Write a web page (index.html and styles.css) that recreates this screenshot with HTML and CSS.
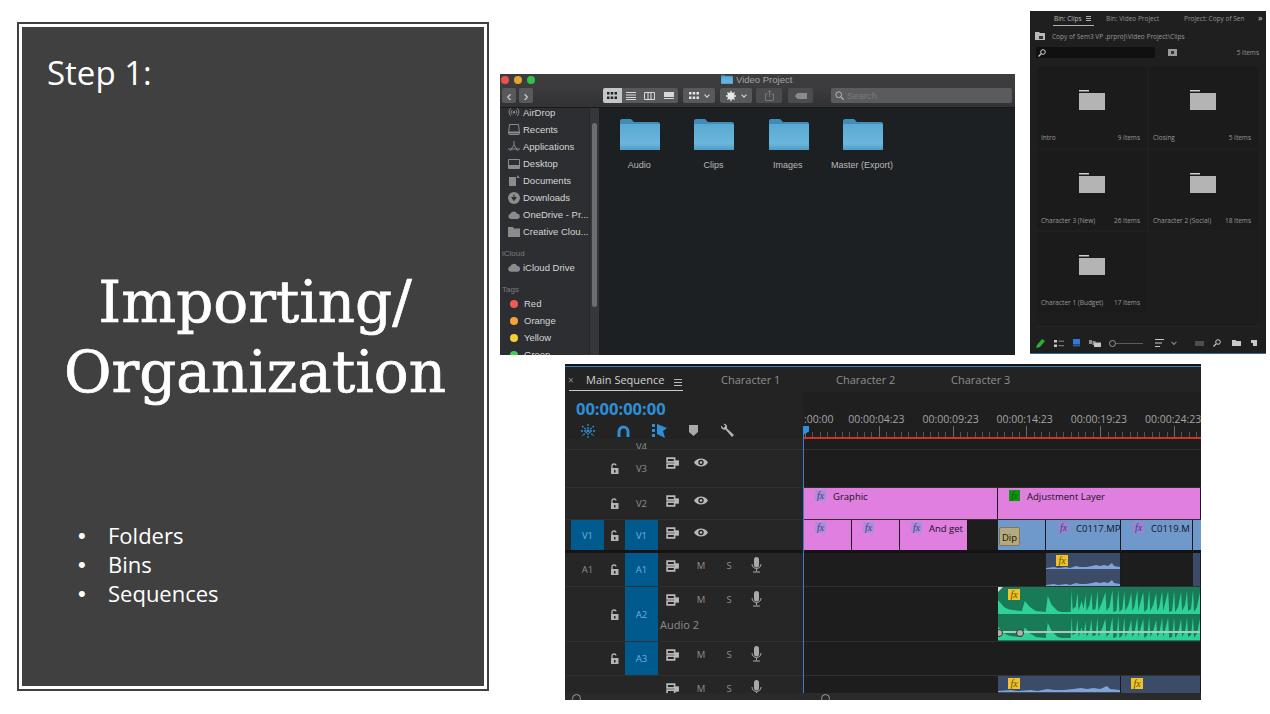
FILE: index.html
```html
<!DOCTYPE html>
<html lang="en">
<head>
    <meta charset="UTF-8">
    <meta name="viewport" content="width=device-width, initial-scale=1.0">
    <title>Step 1: Importing / Organization</title>
    <link rel="stylesheet" href="styles.css">
</head>
<body>
<svg class="defs" width="0" height="0">
    <symbol id="i-toggle" viewBox="0 0 13 11"><path d="M1 1h7v3.500H1zM1 6.500h7V10H1z" fill="none" stroke="currentColor" stroke-width="1.500"/><path d="M8 3h4v5H8z" fill="currentColor"/></symbol>
    <symbol id="i-eye" viewBox="0 0 14 9"><path d="M0 4.500C3 -0.800 11 -0.800 14 4.500C11 9.800 3 9.800 0 4.500Z" fill="currentColor"/><circle cx="7" cy="4.500" r="2.700" fill="#232323"/><circle cx="7" cy="4.500" r="1.300" fill="currentColor"/></symbol>
    <symbol id="i-lock" viewBox="0 0 9 11"><path d="M1 5h7.500v6H1z" fill="currentColor"/><path d="M2 5V2.500C2 .5 6 .5 6 2.500" fill="none" stroke="currentColor" stroke-width="1.300"/><rect x="4" y="7" width="1.500" height="2.500" fill="#232323"/></symbol>
    <symbol id="i-mic" viewBox="0 0 11 16"><rect x="3" y="0" width="5" height="10.500" rx="2.500" fill="currentColor"/><path d="M1 7c0 6 9 6 9 0M5.500 12v2.500M2 15h7" fill="none" stroke="currentColor" stroke-width="1"/></symbol>
    <symbol id="i-mac-folder" viewBox="0 0 40 31"><path d="M0 31V2q0-2 2-2h9l3 3h24q2 0 2 2v26z" fill="#3f8db5"/><path d="M0 30V6q0-1 1-1h38q1 0 1 1v24q0 1-1 1H1q-1 0-1-1z" fill="url(#macBlue)"/></symbol>
    <linearGradient id="macBlue" x1="0" y1="0" x2="0" y2="1"><stop offset="0" stop-color="#59a9d2"/><stop offset=".75" stop-color="#6bb6dc"/><stop offset="1" stop-color="#4f9cc4"/></linearGradient>
    <symbol id="i-bin-folder" viewBox="0 0 26 20"><path d="M0 0h10v1.500H0z" fill="#cfcfcf"/><path d="M0 3h26v17H0z" fill="#b4b4b4"/></symbol>
    <symbol id="i-cloud" viewBox="0 0 13 9"><path d="M3 9a3 3 0 0 1-.5-5.900A4 4 0 0 1 10 3a3 3 0 0 1 0 6z" fill="currentColor"/></symbol>
    <symbol id="i-wave" viewBox="0 0 203 27" preserveAspectRatio="none"><path d="M0 27V13L6 20 10 22 14 23 24 24 27 14 32 20 38 24 48 25 50 9 54 18 60 24 64 25 73 25 74 3 75 22 78 20 80 6 81 24 84 14 86 22 88 8 89 24 92 18 94 6 95 23 98 22 100 4 101 24 105 14 108 5 109 24 112 20 115 3 116 25 119 24 121 2 122 25 125 22 127 4 128 24 131 18 134 6 135 24 137 20 140 3 141 24 143 16 146 5 147 25 150 22 152 3 153 24 156 18 159 6 160 24 162 20 165 4 166 24 168 16 171 4 172 25 175 24 177 3 178 25 181 20 184 5 185 24 188 18 190 4 191 24 194 22 196 3 197 25 200 20 203 5V27Z" fill="#2fd296"/></symbol>
    <symbol id="i-low" viewBox="0 0 74 16" preserveAspectRatio="none"><path d="M0 16V15L8 14 12 15 20 14 24 15 30 13 34 14 40 14 46 13 50 12 54 13 58 12 62 13 66 10 68 13 74 14V16Z" fill="#7fa5d8"/></symbol>
</svg>

<main class="slide">
    <section class="title-card">
        <p class="step">Step 1:</p>
        <h1 class="headline">Importing/<br>Organization</h1>
        <ul class="points">
            <li>Folders</li>
            <li>Bins</li>
            <li>Sequences</li>
        </ul>
    </section>

    <section class="finder">
        <div class="finder-title">
            <span class="light red"></span><span class="light yellow"></span><span class="light green"></span>
            <span class="finder-name"><svg width="12" height="9"><use href="#i-mac-folder"/></svg>Video Project</span>
        </div>
        <div class="finder-tools">
            <div class="btn nav">&#8249;</div>
            <div class="btn nav">&#8250;</div>
            <div class="segs">
                <div class="seg on"><svg width="10" height="8" viewBox="0 0 10 8"><path d="M0 0h2.500v2.500H0zM3.700 0h2.500v2.500H3.700zM7.500 0H10v2.500H7.500zM0 4.500h2.500V7H0zM3.700 4.500h2.500V7H3.700zM7.500 4.500H10V7H7.500z" fill="#222"/></svg></div>
                <div class="seg"><svg width="10" height="8" viewBox="0 0 10 8"><path d="M0 .5h10M0 3h10M0 5.500h10M0 7.500h10" stroke="#d8d8d8"/></svg></div>
                <div class="seg"><svg width="11" height="8" viewBox="0 0 11 8"><path d="M.5.500h10v7H.5zM4 .5v7M7 .5v7" fill="none" stroke="#d8d8d8"/></svg></div>
                <div class="seg"><svg width="10" height="8" viewBox="0 0 10 8"><path d="M0 0h10v5H0z" fill="#d8d8d8"/><path d="M0 6.500h10" stroke="#d8d8d8"/></svg></div>
            </div>
            <div class="btn arrange"><svg width="10" height="8" viewBox="0 0 10 8"><path d="M0 0h2.500v2.500H0zM3.700 0h2.500v2.500H3.700zM7.500 0H10v2.500H7.500zM0 4.500h2.500V7H0zM3.700 4.500h2.500V7H3.700zM7.500 4.500H10V7H7.500z" fill="#e4e4e4"/></svg><i class="chev"></i></div>
            <div class="btn action"><svg width="10" height="10" viewBox="0 0 10 10"><circle cx="5" cy="5" r="2.500" fill="none" stroke="#e8e8e8" stroke-width="2"/><path d="M5 0v10M0 5h10M1.500 1.500l7 7M8.500 1.500l-7 7" stroke="#e8e8e8" stroke-width="1.300"/></svg><i class="chev"></i></div>
            <div class="btn share"><svg width="9" height="11" viewBox="0 0 9 11"><path d="M2.500 4H.5v6.500h8V4h-2M4.500 7V.8M2.800 2.300 4.500.6l1.700 1.700" fill="none" stroke="#777"/></svg></div>
            <div class="btn tag"><svg width="12" height="6" viewBox="0 0 12 6"><path d="M2.500 0H12v6H2.500L0 3z" fill="#8b8b8b"/></svg></div>
            <div class="search"><svg width="9" height="9" viewBox="0 0 9 9"><circle cx="3.700" cy="3.700" r="2.900" fill="none" stroke="#b5b5b5"/><path d="M6 6l2.700 2.700" stroke="#b5b5b5" stroke-width="1.200"/></svg>Search</div>
        </div>
        <div class="finder-body">
            <aside class="sidebar">
                <div class="side-list">
                    <div class="side-item"><svg width="12" height="11" viewBox="0 0 12 11"><path d="M3 9C.5 7 .5 3 3 1M9 9c2.500-2 2.500-6 0-8M4.300 7.500c-1.500-1-1.500-3.500 0-4.500M7.700 7.500c1.500-1 1.500-3.500 0-4.500" fill="none" stroke="#8c8c8c"/><circle cx="6" cy="5.200" r="1.200" fill="#8c8c8c"/></svg>AirDrop</div>
                    <div class="side-item"><svg width="12" height="11" viewBox="0 0 12 11"><path d="M1.500.500h9l1 8.500q0 1.500-1.500 1.500H2Q.5 10.500.5 9z" fill="none" stroke="#8c8c8c"/><path d="M1 7.500h10v2H1z" fill="#8c8c8c"/></svg>Recents</div>
                    <div class="side-item"><svg width="12" height="11" viewBox="0 0 12 11"><path d="M6 0v4M6 4 2 10M6 4l4 6M0 8h12" fill="none" stroke="#8c8c8c"/></svg>Applications</div>
                    <div class="side-item"><svg width="12" height="10" viewBox="0 0 12 10"><path d="M.5.500h11v9H.5z" fill="none" stroke="#8c8c8c"/><path d="M1 6h10v3H1z" fill="#8c8c8c"/></svg>Desktop</div>
                    <div class="side-item"><svg width="12" height="11" viewBox="0 0 12 11"><path d="M1 2h7v9H1z" fill="#8c8c8c"/><path d="M9 0l3 3H9z" fill="#8c8c8c"/></svg>Documents</div>
                    <div class="side-item"><svg width="12" height="12" viewBox="0 0 12 12"><circle cx="6" cy="6" r="6" fill="#8c8c8c"/><path d="M6 2.500v4M3.800 5.500 6 8.500l2.200-3z" stroke="#2c2e31" fill="#2c2e31"/></svg>Downloads</div>
                    <div class="side-item"><svg width="12" height="8"><use href="#i-cloud"/></svg>OneDrive - Pr...</div>
                    <div class="side-item"><svg width="12" height="10" viewBox="0 0 12 10"><path d="M0 0h5l1 1.500h6V10H0z" fill="#8c8c8c"/></svg>Creative Clou...</div>
                    <div class="side-head">iCloud</div>
                    <div class="side-item"><svg width="12" height="9"><use href="#i-cloud"/></svg>iCloud Drive</div>
                    <div class="side-head">Tags</div>
                    <div class="side-item"><span class="dot red"></span>Red</div>
                    <div class="side-item"><span class="dot orange"></span>Orange</div>
                    <div class="side-item"><span class="dot yellow"></span>Yellow</div>
                    <div class="side-item"><span class="dot green"></span>Green</div>
                </div>
                <div class="side-scroll"><span></span></div>
            </aside>
            <div class="folders">
                <div class="folder"><svg width="40" height="31"><use href="#i-mac-folder"/></svg><span>Audio</span></div>
                <div class="folder"><svg width="40" height="31"><use href="#i-mac-folder"/></svg><span>Clips</span></div>
                <div class="folder"><svg width="40" height="31"><use href="#i-mac-folder"/></svg><span>Images</span></div>
                <div class="folder"><svg width="40" height="31"><use href="#i-mac-folder"/></svg><span>Master (Export)</span></div>
            </div>
        </div>
    </section>

    <section class="bin">
        <div class="bin-tabs">
            <span class="bin-tab on">Bin: Clips <b class="burger"></b></span>
            <span class="bin-tab second">Bin: Video Project</span>
            <span class="bin-tab third">Project: Copy of Sen</span>
            <span class="bin-more">&raquo;</span>
        </div>
        <div class="bin-path"><svg width="10" height="8" viewBox="0 0 10 8"><path d="M0 0h4l1 1h5v7H0z" fill="#b9b9b9"/><path d="M4 4h4v3H4z" fill="#333"/></svg>Copy of Sem3 VP .prproj\Video Project\Clips</div>
        <div class="bin-search">
            <div class="bin-input"><svg width="8" height="8" viewBox="0 0 8 8"><circle cx="5" cy="3" r="2.300" fill="none" stroke="#cfcfcf"/><path d="M3.300 4.700.5 7.500" stroke="#cfcfcf" stroke-width="1.200"/></svg></div>
            <svg class="bin-new" width="9" height="7" viewBox="0 0 9 7"><path d="M0 0h9v7H0z" fill="#9a9a9a"/><path d="M3 2h3v3H3z" fill="#333"/></svg>
            <span class="bin-count">5 Items</span>
        </div>
        <div class="bin-grid">
            <div class="bin-cell"><svg width="26" height="20"><use href="#i-bin-folder"/></svg><div class="bin-meta"><span>Intro</span><span>9 Items</span></div></div>
            <div class="bin-cell"><svg width="26" height="20"><use href="#i-bin-folder"/></svg><div class="bin-meta"><span>Closing</span><span>5 Items</span></div></div>
            <div class="bin-cell"><svg width="26" height="20"><use href="#i-bin-folder"/></svg><div class="bin-meta"><span>Character 3 (New)</span><span>26 Items</span></div></div>
            <div class="bin-cell"><svg width="26" height="20"><use href="#i-bin-folder"/></svg><div class="bin-meta"><span>Character 2 (Social)</span><span>18 Items</span></div></div>
            <div class="bin-cell"><svg width="26" height="20"><use href="#i-bin-folder"/></svg><div class="bin-meta"><span>Character 1 (Budget)</span><span>17 Items</span></div></div>
        </div>
        <div class="bin-foot">
            <svg width="9" height="9" viewBox="0 0 9 9"><path d="M0 9l1-3 5-6 3 2-5 6z" fill="#2fae3a"/></svg>
            <svg width="10" height="7" viewBox="0 0 10 7"><path d="M0 0h3v2.500H0zM0 4.500h3V7H0z" fill="#c9c9c9"/><path d="M4.500 1.200H10M4.500 5.700H10" stroke="#8a8a8a"/></svg>
            <svg width="7" height="8" viewBox="0 0 7 8"><path d="M0 0h7v5.500H0z" fill="#2d7bd4"/><path d="M0 6.800h7" stroke="#2d7bd4"/></svg>
            <svg width="12" height="7" viewBox="0 0 12 7"><path d="M0 0h3v4H0zM3.500 1h3v4h-3z" fill="#8f8f8f"/><path d="M5 2.500h7V7H5z" fill="#c4c4c4"/></svg>
            <span class="zoom-slider"></span>
            <svg width="9" height="8" viewBox="0 0 9 8"><path d="M0 .5h9M0 4h7M0 7.500h5" stroke="#c9c9c9"/></svg>
            <i class="chev small"></i>
            <svg class="dim" width="9" height="5" viewBox="0 0 9 5"><path d="M0 0h9v5H0z" fill="#4d4d4d"/></svg>
            <svg width="8" height="8" viewBox="0 0 8 8"><circle cx="5" cy="3" r="2.300" fill="none" stroke="#c9c9c9"/><path d="M3.300 4.700.5 7.500" stroke="#c9c9c9" stroke-width="1.200"/></svg>
            <svg width="9" height="6" viewBox="0 0 9 6"><path d="M0 0h3.500l1 1H9v5H0z" fill="#c9c9c9"/></svg>
            <svg width="6" height="6" viewBox="0 0 6 6"><path d="M0 0h6v6H2V3H0z" fill="#c9c9c9"/></svg>
        </div>
    </section>

    <section class="timeline">
        <div class="tl-tabs">
            <span class="tl-close">&times;</span>
            <span class="tl-tab on">Main Sequence <b class="burger big"></b></span>
            <span class="tl-tab c1">Character 1</span>
            <span class="tl-tab c2">Character 2</span>
            <span class="tl-tab c3">Character 3</span>
        </div>
        <div class="tl-head">
            <div class="tl-tools">
                <div class="timecode">00:00:00:00</div>
                <div class="tool-row">
                    <svg width="14" height="14" viewBox="0 0 14 14"><path d="M7 0v14M1 2l12 10M13 2 1 12M0 7h14" stroke="#2f8fd6" stroke-dasharray="2 1" stroke-width="1.300"/></svg>
                    <svg width="13" height="12" viewBox="0 0 13 12"><path d="M2 12V6.500a4.500 4.500 0 0 1 9 0V12" fill="none" stroke="#2f8fd6" stroke-width="3"/></svg>
                    <svg width="15" height="14" viewBox="0 0 15 14"><path d="M0 0h3v3H0zM0 5h3v3H0zM0 10h3v3H0z" fill="#2f8fd6"/><path d="M5 0 15 4l-4 3 2 7-8-4z" fill="#2f8fd6"/></svg>
                    <svg width="9" height="11" viewBox="0 0 9 11"><path d="M0 0h9v7l-4.500 4L0 7z" fill="#a9a9a9"/></svg>
                    <svg width="15" height="15" viewBox="0 0 15 15"><path d="M4.500 1 3 .5 5.500 3l-2 2L1 2.500C.5 5 2.500 7.500 5.500 6.500L12 14l2-2-7-6.500C7.500 3 6.500 1 4.500 1z" fill="#b4b4b4"/></svg>
                </div>
            </div>
            <div class="ruler">
                <div class="ruler-labels"><span class="first">:00:00</span><span>00:00:04:23</span><span>00:00:09:23</span><span>00:00:14:23</span><span>00:00:19:23</span><span>00:00:24:23</span></div>
                <div class="ruler-ticks"></div>
            </div>
        </div>

        <div class="track v4">
            <div class="t-ctl"><i></i><i></i><i></i><span class="t-name">V4</span></div>
            <div class="t-lane"></div>
        </div>
        <div class="track v3">
            <div class="t-ctl"><i></i><i></i><svg class="t-lock"><use href="#i-lock"/></svg><span class="t-name">V3</span><svg class="t-out"><use href="#i-toggle"/></svg><svg class="t-eye"><use href="#i-eye"/></svg></div>
            <div class="t-lane"></div>
        </div>
        <div class="track v2">
            <div class="t-ctl"><i></i><i></i><svg class="t-lock"><use href="#i-lock"/></svg><span class="t-name">V2</span><svg class="t-out"><use href="#i-toggle"/></svg><svg class="t-eye"><use href="#i-eye"/></svg></div>
            <div class="t-lane">
                <div class="clip pink" style="width:194px"><em class="fx purple">fx</em>Graphic</div>
                <div class="clip pink" style="width:203px"><em class="fx lime">fx</em>Adjustment Layer</div>
            </div>
        </div>
        <div class="track v1">
            <div class="t-ctl"><i></i><span class="t-src">V1</span><svg class="t-lock"><use href="#i-lock"/></svg><span class="t-name on">V1</span><svg class="t-out"><use href="#i-toggle"/></svg><svg class="t-eye"><use href="#i-eye"/></svg></div>
            <div class="t-lane">
                <div class="clip pink" style="width:48px"><em class="fx purple">fx</em></div>
                <div class="clip pink" style="width:48px"><em class="fx purple">fx</em></div>
                <div class="clip pink" style="width:68px"><em class="fx purple">fx</em>And get</div>
                <div class="clip gap" style="width:30px"></div>
                <div class="clip blue" style="width:48px"><span class="dip">Dip</span></div>
                <div class="clip blue" style="width:75px"><em class="fx violet">fx</em>C0117.MP</div>
                <div class="clip blue" style="width:72px"><em class="fx violet">fx</em>C0119.M</div>
                <div class="clip blue" style="width:8px"></div>
            </div>
        </div>
        <div class="track a1">
            <div class="t-ctl"><i></i><span class="t-plain">A1</span><svg class="t-lock"><use href="#i-lock"/></svg><span class="t-name on">A1</span><svg class="t-out"><use href="#i-toggle"/></svg><span class="t-m">M</span><span class="t-s">S</span><svg class="t-mic"><use href="#i-mic"/></svg></div>
            <div class="t-lane">
                <div class="clip gap" style="width:242px"></div>
                <div class="clip audio" style="width:75px"><em class="fx gold">fx</em><svg class="low"><use href="#i-low"/></svg><svg class="low lower"><use href="#i-low"/></svg></div>
                <div class="clip gap" style="width:72px"></div>
                <div class="clip audio" style="width:8px"></div>
            </div>
        </div>
        <div class="track a2">
            <div class="t-ctl"><i></i><i></i><svg class="t-lock"><use href="#i-lock"/></svg><span class="t-name on">A2</span><svg class="t-out"><use href="#i-toggle"/></svg><span class="t-m">M</span><span class="t-s">S</span><svg class="t-mic"><use href="#i-mic"/></svg><span class="t-label">Audio 2</span></div>
            <div class="t-lane">
                <div class="clip gap" style="width:194px"></div>
                <div class="clip wave" style="width:203px">
                    <em class="fx gold">fx</em>
                    <svg class="wave-ch"><use href="#i-wave"/></svg>
                    <svg class="wave-ch lower"><use href="#i-wave"/></svg>
                    <span class="auto-line"></span>
                    <span class="key k1"></span><span class="key k2"></span>
                    <span class="corner"></span>
                </div>
            </div>
        </div>
        <div class="track a3">
            <div class="t-ctl"><i></i><i></i><svg class="t-lock"><use href="#i-lock"/></svg><span class="t-name on">A3</span><svg class="t-out"><use href="#i-toggle"/></svg><span class="t-m">M</span><span class="t-s">S</span><svg class="t-mic"><use href="#i-mic"/></svg></div>
            <div class="t-lane"></div>
        </div>
        <div class="track a4">
            <div class="t-ctl"><i></i><i></i><i></i><i></i><svg class="t-out"><use href="#i-toggle"/></svg><span class="t-m">M</span><span class="t-s">S</span><svg class="t-mic"><use href="#i-mic"/></svg></div>
            <div class="t-lane">
                <div class="clip gap" style="width:194px"></div>
                <div class="clip audio" style="width:123px"><em class="fx gold">fx</em><svg class="low"><use href="#i-low"/></svg></div>
                <div class="clip audio" style="width:80px"><em class="fx gold">fx</em></div>
            </div>
        </div>
        <div class="tl-scroll"><span class="knob k-a"></span><span class="knob k-b"></span></div>
        <span class="playhead"></span>
    </section>
</main>
</body>
</html>
```

FILE: styles.css
```css
html, body { margin: 0; padding: 0; background: #fff; }
.defs { position: absolute; }
.slide { position: relative; width: 1270px; height: 714px; overflow: hidden; background: #fff; font-family: "Open Sans", sans-serif; }
svg { display: block; flex: none; }

/* left title card */
.title-card { position: absolute; left: 19px; top: 24px; width: 462px; height: 659px; border: 3px solid #fff; outline: 2px solid #404040; background: #404040; color: #fff; box-sizing: content-box; }
.step { margin: 25px 0 0 25px; font-size: 33px; line-height: 42px; }
.headline { margin: 173px 0 0 0; padding-left: 4px; font-family: "DejaVu Serif", serif; font-weight: 400; font-size: 58px; line-height: 70px; text-align: center; -webkit-text-stroke: .7px #fff; }
.points { margin: 114px 0 0 0; padding: 0 0 0 56px; list-style: none; font-size: 22px; line-height: 29px; }
.points li { display: flex; }
.points li::before { content: "\2022"; width: 30px; font-family: "Liberation Sans", sans-serif; font-size: 22px; }

/* finder window */
.finder { position: absolute; left: 500px; top: 74px; width: 515px; height: 281px; overflow: hidden; background: #1d2023; font-family: "Liberation Sans", sans-serif; }
.finder-title { display: flex; align-items: center; height: 11px; padding: 0 0 0 1px; gap: 5px; background: #3c3c3e; position: relative; }
.light { width: 8px; height: 8px; border-radius: 50%; }
.light.red { background: #e9534c; }
.light.yellow { background: #e3a52f; }
.light.green { background: #34c14a; }
.finder-name { position: absolute; left: 221px; top: 0; display: flex; align-items: center; gap: 3px; font-size: 9.500px; line-height: 11px; color: #a4a4a4; }
.finder-tools { display: flex; align-items: center; height: 21px; padding: 0 0 1px 2px; background: linear-gradient(#3c3c3e, #323234); color: #ddd; border-bottom: 1px solid #17191b; }
.btn { display: flex; align-items: center; justify-content: center; gap: 6px; height: 15px; background: #58595b; border-radius: 2px; }
.btn.nav { width: 14px; margin-right: 3px; font-size: 15px; line-height: 13px; }
.segs { display: flex; width: 75px; height: 15px; margin-left: 67px; background: #58595b; border-radius: 2px; overflow: hidden; }
.seg { display: flex; align-items: center; justify-content: center; flex: 1; }
.seg.on { background: #c4c7ca; }
.btn.arrange { width: 32px; margin-left: 5px; }
.btn.action { width: 32px; margin-left: 5px; }
.btn.share { width: 26px; margin-left: 4px; background: #4b4c4e; }
.btn.tag { width: 25px; margin-left: 6px; background: #4b4c4e; }
.search { display: flex; align-items: center; gap: 3px; width: 177px; height: 15px; margin-left: 18px; padding-left: 4px; background: #5a5b5d; border-radius: 2px; font-size: 9.500px; color: #7a7a7a; }
.chev { width: 3px; height: 3px; border: solid #ddd; border-width: 0 1px 1px 0; transform: rotate(45deg); margin-top: -2px; }
.chev.small { border-color: #8d8d8d; }
.finder-body { display: flex; height: 248px; }
.sidebar { display: flex; width: 99px; overflow: hidden; flex: none; background: #2c2e31; }
.side-list { width: 89px; flex: none; }
.side-item { display: flex; align-items: center; gap: 3px; height: 17px; padding-left: 8px; font-size: 9.500px; color: #d6d6d6; white-space: nowrap; }
.side-item svg { color: #8c8c8c; width: 12px; }
.side-list .side-item:first-child { margin-top: -4px; }
.side-head { height: 12px; margin-top: 7px; padding-left: 2px; font-size: 8px; line-height: 14px; color: #7d7d7d; }
.dot { width: 8px; height: 8px; margin: 0 3px 0 2px; border-radius: 50%; flex: none; }
.dot.red { background: #ee5a55; }
.dot.orange { background: #f2a33a; }
.dot.yellow { background: #f5cf33; }
.dot.green { background: #3ecf5a; }
.side-scroll { width: 10px; background: #35373a; border-left: 1px solid #25272a; box-sizing: border-box; padding: 15px 2px 0 2px; }
.side-scroll span { display: block; width: 5px; height: 184px; background: #6b6d70; border-radius: 3px; }
.folders { display: flex; margin-left: 4px; padding-top: 11px; }
.folder { display: flex; flex-direction: column; align-items: center; width: 74.300px; font-size: 9px; color: #b9b9b9; white-space: nowrap; }
.folder span { margin: 10px 2px 0 0; line-height: 11px; }

/* premiere bin panel */
.bin { position: absolute; left: 1030px; top: 11px; width: 236px; height: 343px; box-sizing: border-box; background: #1f1f1f; border-bottom: 1px solid #3a6a92; font-size: 6.500px; color: #a8a8a8; overflow: hidden; }
.bin-tabs { position: relative; height: 19px; }
.bin-tab { position: absolute; top: 3px; line-height: 9px; white-space: nowrap; color: #959595; }
.bin-tab.on { left: 23px; width: 40px; height: 11px; color: #bdbdbd; border-bottom: 1px solid #b0b0b0; display: flex; gap: 4px; padding-left: 1px; }
.bin-tab.second { left: 76px; }
.bin-tab.third { left: 154px; }
.bin-more { position: absolute; left: 228px; top: 0; font-size: 9px; line-height: 13px; color: #cfcfcf; }
.burger { display: inline-block; width: 5px; height: 1px; margin-top: 2px; background: #b0b0b0; box-shadow: 0 2px #b0b0b0, 0 4px #b0b0b0; }
.burger.big { width: 8px; height: 1px; margin: 0 0 3px 7px; vertical-align: middle; box-shadow: 0 3px #bdbdbd, 0 6px #bdbdbd; }
.bin-path { display: flex; align-items: center; gap: 7px; height: 12px; padding-left: 5px; color: #989898; }
.bin-search { display: flex; align-items: center; height: 11px; margin: 5px 0 8px 6px; }
.bin-input { display: flex; align-items: center; width: 119px; height: 11px; padding-left: 2px; box-sizing: border-box; background: #101010; }
.bin-new { margin-left: 13px; }
.bin-count { margin-left: auto; margin-right: 7px; color: #959595; }
.bin-grid { display: grid; grid-template-columns: 112px 111px; grid-auto-rows: 82.500px; height: 260px; margin-left: 6px; width: 223px; background: #1d1d1d; border: solid #262626; border-width: 0 0 1px 0; }
.bin-cell { display: flex; flex-direction: column; align-items: center; padding-top: 23px; padding-right: 1px; box-sizing: border-box; background: #1b1b1b; border: 1px solid #1f1f1f; }
.bin-meta { display: flex; justify-content: space-between; margin-top: 23px; padding: 0 6px 0 4px; box-sizing: border-box; color: #999; white-space: nowrap; width: 100%; }
.bin-foot { display: flex; align-items: center; height: 16px; margin-top: 8px; padding-left: 6px; }
.bin-foot svg { margin-right: 9px; }
.zoom-slider { position: relative; width: 39px; height: 1px; margin: 0 12px 0 -1px; background: #5c5c5c; }
.zoom-slider::before { content: ""; position: absolute; left: 0; top: -3px; width: 5px; height: 5px; border: 1px solid #9a9a9a; border-radius: 50%; background: #1f1f1f; }
.bin-foot .chev { margin-right: 19px; margin-left: -1px; }
.bin-foot svg:nth-last-child(3) { margin-right: 11px; }
.bin-foot svg:nth-last-child(2) { margin-right: 10px; }

/* premiere timeline */
.timeline { position: absolute; left: 565px; top: 364px; width: 636px; height: 336px; overflow: hidden; background: #232323; border-top: 2px solid #141414; box-sizing: border-box; font-family: "Open Sans", sans-serif; }
.tl-tabs { position: relative; height: 25px; border-top: 1px solid #3a7fb5; color: #8f8f8f; font-size: 11px; }
.tl-close { position: absolute; left: 3px; top: 6px; font-size: 10px; line-height: 14px; color: #8b8b8b; }
.tl-tab { position: absolute; top: 5px; line-height: 16px; white-space: nowrap; }
.tl-tab.on { left: 4px; width: 114px; height: 19px; padding-left: 17px; box-sizing: border-box; border-bottom: 1px solid #c9c9c9; color: #d2d2d2; }
.tl-tab.c1 { left: 156px; }
.tl-tab.c2 { left: 271px; }
.tl-tab.c3 { left: 386px; }
.tl-head { display: grid; grid-template-columns: 238px 1fr; height: 47px; }
.tl-tools { padding: 7px 0 0 11px; }
.timecode { font-size: 16.500px; line-height: 20px; font-weight: 700; color: #2f8fd6; }
.tool-row { display: flex; align-items: center; gap: 22px; margin-top: 4px; padding-left: 5px; }
.ruler { background: #1f1f1f; border-bottom: 2px solid #d5321f; height: 45px; overflow: hidden; }
.ruler-labels { display: flex; gap: 14.200px; padding: 20px 0 0 1px; height: 14px; font-size: 10.500px; line-height: 14px; color: #a4a4a4; white-space: nowrap; }
.ruler-labels span { width: 60px; flex: none; }
.ruler-labels .first { width: 30px; }
.ruler-ticks { height: 11px; background-image: repeating-linear-gradient(90deg, #6d6d6d 0 1px, transparent 1px 73.800px), repeating-linear-gradient(90deg, #555 0 1px, transparent 1px 7.380px); background-size: 100% 100%, 100% 5px; background-position: 2px 0, 2px bottom; background-repeat: no-repeat; }
.track { display: grid; grid-template-columns: 238px 1fr; border-bottom: 1px solid #303030; box-sizing: border-box; overflow: hidden; }
.track.v4 { height: 11px; }
.track.v3 { height: 38px; }
.track.v2 { height: 32px; }
.track.v1 { height: 33px; border-bottom: 3px solid #141414; }
.track.a1 { height: 34px; }
.track.a2 { height: 55px; }
.track.a3 { height: 34px; }
.track.a4 { height: 17px; border-bottom: 0; }
.t-ctl { position: relative; display: grid; grid-template-columns: 6px 33px 21px 33px 30px 26px 30px 25px; align-items: center; justify-items: center; color: #8e8e8e; background: #262626; font-size: 9.500px; }
.t-name, .t-src, .t-plain { display: flex; align-items: center; justify-content: center; width: 33px; height: 100%; }
.t-name.on, .t-src { background: #005a8e; color: #6fb0dc; }
.t-src { height: 30px; }
.t-plain { color: #8e8e8e; }
.t-lock { width: 9px; height: 11px; color: #b4b4b4; }
.t-out, .t-eye, .t-m, .t-s, .t-mic { align-self: start; margin-top: 7px; color: #b9b9b9; }
.t-out { width: 14px; height: 12px; }
.t-eye { width: 14px; height: 9px; margin-top: 8px; }
.t-m, .t-s { font-size: 9.500px; line-height: 12px; color: #8e8e8e; }
.t-mic { width: 11px; height: 16px; margin-top: 4px; color: #a9a9a9; }
.t-label { position: absolute; left: 95px; top: 31px; font-size: 11px; line-height: 14px; color: #8c8c8c; }
.t-lane { display: flex; min-width: 0; padding-left: 1px; background: #1d1d1d; overflow: hidden; }
.v4 .t-ctl { align-items: start; }
.v4 .t-name { height: 11px; padding-top: 2px; }
.clip { position: relative; flex: none; box-sizing: border-box; height: 100%; overflow: hidden; font-size: 9.500px; line-height: 14px; color: #17121a; white-space: nowrap; border-right: 1px solid #1a1a1a; }
.clip.pink { background: #e07fe0; padding: 2px 0 0 11px; display: flex; }
.clip.blue { background: #7099cb; padding: 2px 0 0 12px; display: flex; }
.clip.gap { background: transparent; border: 0; }
.clip.audio { background: #3b4b68; }
.clip.wave { background: #187a57; }
.fx { display: inline-block; width: 11px; height: 11px; margin-right: 7px; font-family: "Liberation Serif", serif; font-size: 10px; line-height: 11px; text-align: center; color: #4d3a78; flex: none; background: #a98fdc; }
.fx.violet { background: #9a85d2; }
.fx.lime { background: #0f960f; color: #066006; }
.fx.gold { position: absolute; left: 10px; top: 2px; z-index: 2; width: 12px; height: 11px; background: #eec32b; color: #6d5200; }
.dip { position: absolute; left: 1px; top: 7px; width: 21px; height: 19px; box-sizing: border-box; background: #b5a97e; border: 1px solid #81775a; border-radius: 2px; font-size: 9.500px; line-height: 19px; text-align: center; color: #15120a; }
.low { position: absolute; left: 0; top: 0; width: 100%; height: 16px; }
.low.lower { top: 17px; }
.wave-ch { position: absolute; left: 0; top: 0; width: 100%; height: 27px; }
.wave-ch.lower { top: 27px; height: 26px; }
.auto-line { position: absolute; left: 0; right: 0; top: 44px; height: 2px; background: #a9c9bc; }
.key { position: absolute; top: 42px; width: 6px; height: 6px; border: 1px solid #333; border-radius: 50%; background: #a8b5b0; }
.key.k1 { left: -3px; }
.key.k2 { left: 18px; }
.corner { position: absolute; left: 0; top: 0; width: 5px; height: 5px; background: #ddd; clip-path: polygon(0 0, 100% 0, 0 100%); }
.tl-scroll { position: relative; height: 7px; background: #2a2a2a; overflow: hidden; }
.knob { position: absolute; top: 1px; width: 7px; height: 7px; border: 1px solid #9c9c9c; border-radius: 50%; }
.knob.k-a { left: 7px; }
.knob.k-b { left: 256px; }
.playhead { position: absolute; left: 238px; top: 60px; width: 1px; height: 267px; background: #3d7cc4; }
.playhead::before { content: ""; position: absolute; left: 0; top: 0; width: 6px; height: 9px; background: #2f8fe0; clip-path: polygon(0 0, 100% 0, 100% 60%, 0 100%); }
```
